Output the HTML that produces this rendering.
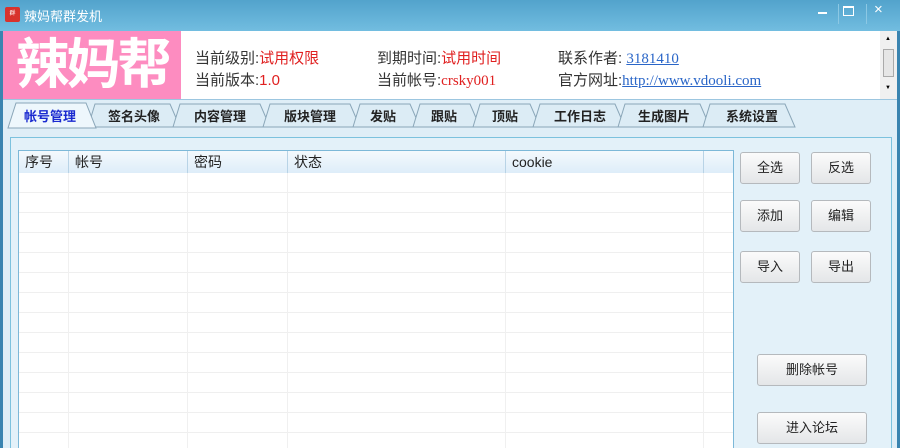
<!DOCTYPE html><html><head><meta charset="utf-8"><style>
html,body{margin:0;width:900px;height:448px;overflow:hidden}
body{background:#dfeef7;font-family:"Liberation Sans","Noto Sans CJK SC",sans-serif;position:relative}
.a{position:absolute}
.btn{position:absolute;border:1px solid #b5b9bd;border-radius:3px;background:linear-gradient(#fbfbfb,#e4e6e8);font-size:13px;color:#222;text-align:center;box-sizing:border-box}
.hd{position:absolute;top:0;height:22px;line-height:22px;font-size:14px;color:#222;padding-left:6px;border-right:1px solid #b8d3e6;box-sizing:border-box}
</style></head><body>
<div class="a" style="left:0;top:0;width:900px;height:31px;background:linear-gradient(#52a3cc,#72bde0)"></div>
<div class="a" style="left:5px;top:7px;width:15px;height:15px;background:#d8322c;border-radius:2px;font-size:6px;color:#fff;line-height:15px;text-align:center">群</div>
<div class="a" style="left:24px;top:6px;font-size:13px;color:#fff">辣妈帮群发机</div>
<div class="a" style="left:838px;top:4px;width:1px;height:20px;background:#8cc8e4"></div>
<div class="a" style="left:866px;top:4px;width:1px;height:20px;background:#8cc8e4"></div>
<div class="a" style="left:818px;top:12px;width:9px;height:2px;background:#fff"></div>
<div class="a" style="left:843px;top:6px;width:9px;height:7px;border:1px solid #fff;border-top-width:2px"></div>
<div class="a" style="left:874px;top:1px;font-size:15px;color:#fff">×</div>
<div class="a" style="left:0;top:31px;width:3px;height:417px;background:#3a84b0"></div>
<div class="a" style="left:3px;top:31px;width:877px;height:68px;background:#fff"></div>
<div class="a" style="left:3px;top:31px;width:178px;height:68px;background:#fd8cc0;color:#fff;font-size:54px;font-weight:bold;line-height:68px;text-align:center;letter-spacing:-3px">辣妈帮</div>
<div class="a" style="left:880px;top:31px;width:17px;height:68px;background:#f0f0f0"><div class="a" style="left:3px;top:18px;width:9px;height:26px;border:1px solid #aaa;background:#e6e6e6"></div><div class="a" style="left:5px;top:5px;font-size:6px">▲</div><div class="a" style="left:5px;top:54px;font-size:6px">▼</div></div>
<div class="a" style="left:195px;top:48px;font-size:15px;line-height:22px;color:#333">当前级别:<span style="color:#e02020">试用权限</span><br>当前版本:<span style="color:#e02020">1.0</span></div>
<div class="a" style="left:377px;top:48px;font-size:15px;line-height:22px;color:#333">到期时间:<span style="color:#e02020">试用时间</span><br>当前帐号:<span style="color:#e02020;font-family:'Liberation Serif'">crsky001</span></div>
<div class="a" style="left:558px;top:48px;font-size:15px;line-height:22px;color:#333">联系作者: <span style="color:#2a66c8;text-decoration:underline;font-family:'Liberation Serif'">3181410</span><br>官方网址:<span style="color:#2a66c8;text-decoration:underline;font-family:'Liberation Serif'">http://www.vdooli.com</span></div>
<div class="a" style="left:3px;top:99px;width:894px;height:1px;background:#9cc6e0"></div>
<svg class="a" style="left:0;top:100px" width="900" height="30">
<g fill="#dcecf5" stroke="#8aa6b8" stroke-width="1">
<polygon points="88,27 95,4 170,4 180,27"/><polygon points="173,27 180,4 260,4 270,27"/><polygon points="263,27 270,4 350,4 360,27"/><polygon points="353,27 360,4 410,4 420,27"/><polygon points="413,27 420,4 470,4 480,27"/><polygon points="473,27 480,4 530,4 540,27"/><polygon points="533,27 540,4 615,4 625,27"/><polygon points="618,27 625,4 700,4 710,27"/><polygon points="703,27 710,4 785,4 795,27"/>
<polygon fill="#eef7fc" points="8,28 16,3 86,3 96,28"/></g>
<g font-size="13" font-weight="bold" font-family="Liberation Sans,Noto Sans CJK SC,sans-serif" fill="#222" text-anchor="middle">
<text x="50" y="21" fill="#1a2ad0">帐号管理</text><text x="134" y="21">签名头像</text><text x="220" y="21">内容管理</text><text x="310" y="21">版块管理</text><text x="383" y="21">发贴</text><text x="444" y="21">跟贴</text><text x="505" y="21">顶贴</text><text x="580" y="21">工作日志</text><text x="664" y="21">生成图片</text><text x="752" y="21">系统设置</text></g></svg>
<div class="a" style="left:10px;top:137px;width:880px;height:310px;border:1px solid #7cc2de;border-bottom:0;background:#e3f1f9"></div>
<div class="a" style="left:18px;top:150px;width:714px;height:297px;border:1px solid #7cb8d8;border-bottom:0;background:#fff;overflow:hidden">
<div class="a" style="left:0;top:0;width:714px;height:22px;background:linear-gradient(#f4f9fd,#deedf9)"></div>
<div class="hd" style="left:0;width:50px">序号</div><div class="hd" style="left:50px;width:119px">帐号</div><div class="hd" style="left:169px;width:100px">密码</div><div class="hd" style="left:269px;width:218px">状态</div><div class="hd" style="left:487px;width:198px">cookie</div>
<div class="a" style="left:0;top:22px;width:714px;height:275px;background:repeating-linear-gradient(#fff 0 19px,#efefef 19px 20px)"></div>
<div class="a" style="left:49px;top:22px;width:1px;height:275px;background:#f0f0f0"></div><div class="a" style="left:168px;top:22px;width:1px;height:275px;background:#f0f0f0"></div><div class="a" style="left:268px;top:22px;width:1px;height:275px;background:#f0f0f0"></div><div class="a" style="left:486px;top:22px;width:1px;height:275px;background:#f0f0f0"></div><div class="a" style="left:684px;top:22px;width:1px;height:275px;background:#f0f0f0"></div>
</div>
<div class="btn" style="left:740px;top:152px;width:60px;height:32px;line-height:30px">全选</div>
<div class="btn" style="left:811px;top:152px;width:60px;height:32px;line-height:30px">反选</div>
<div class="btn" style="left:740px;top:200px;width:60px;height:32px;line-height:30px">添加</div>
<div class="btn" style="left:811px;top:200px;width:60px;height:32px;line-height:30px">编辑</div>
<div class="btn" style="left:740px;top:251px;width:60px;height:32px;line-height:30px">导入</div>
<div class="btn" style="left:811px;top:251px;width:60px;height:32px;line-height:30px">导出</div>
<div class="btn" style="left:757px;top:354px;width:110px;height:32px;line-height:30px">删除帐号</div>
<div class="btn" style="left:757px;top:412px;width:110px;height:32px;line-height:30px">进入论坛</div>
<div class="a" style="left:897px;top:31px;width:3px;height:417px;background:#3a84b0"></div>
</body></html>
